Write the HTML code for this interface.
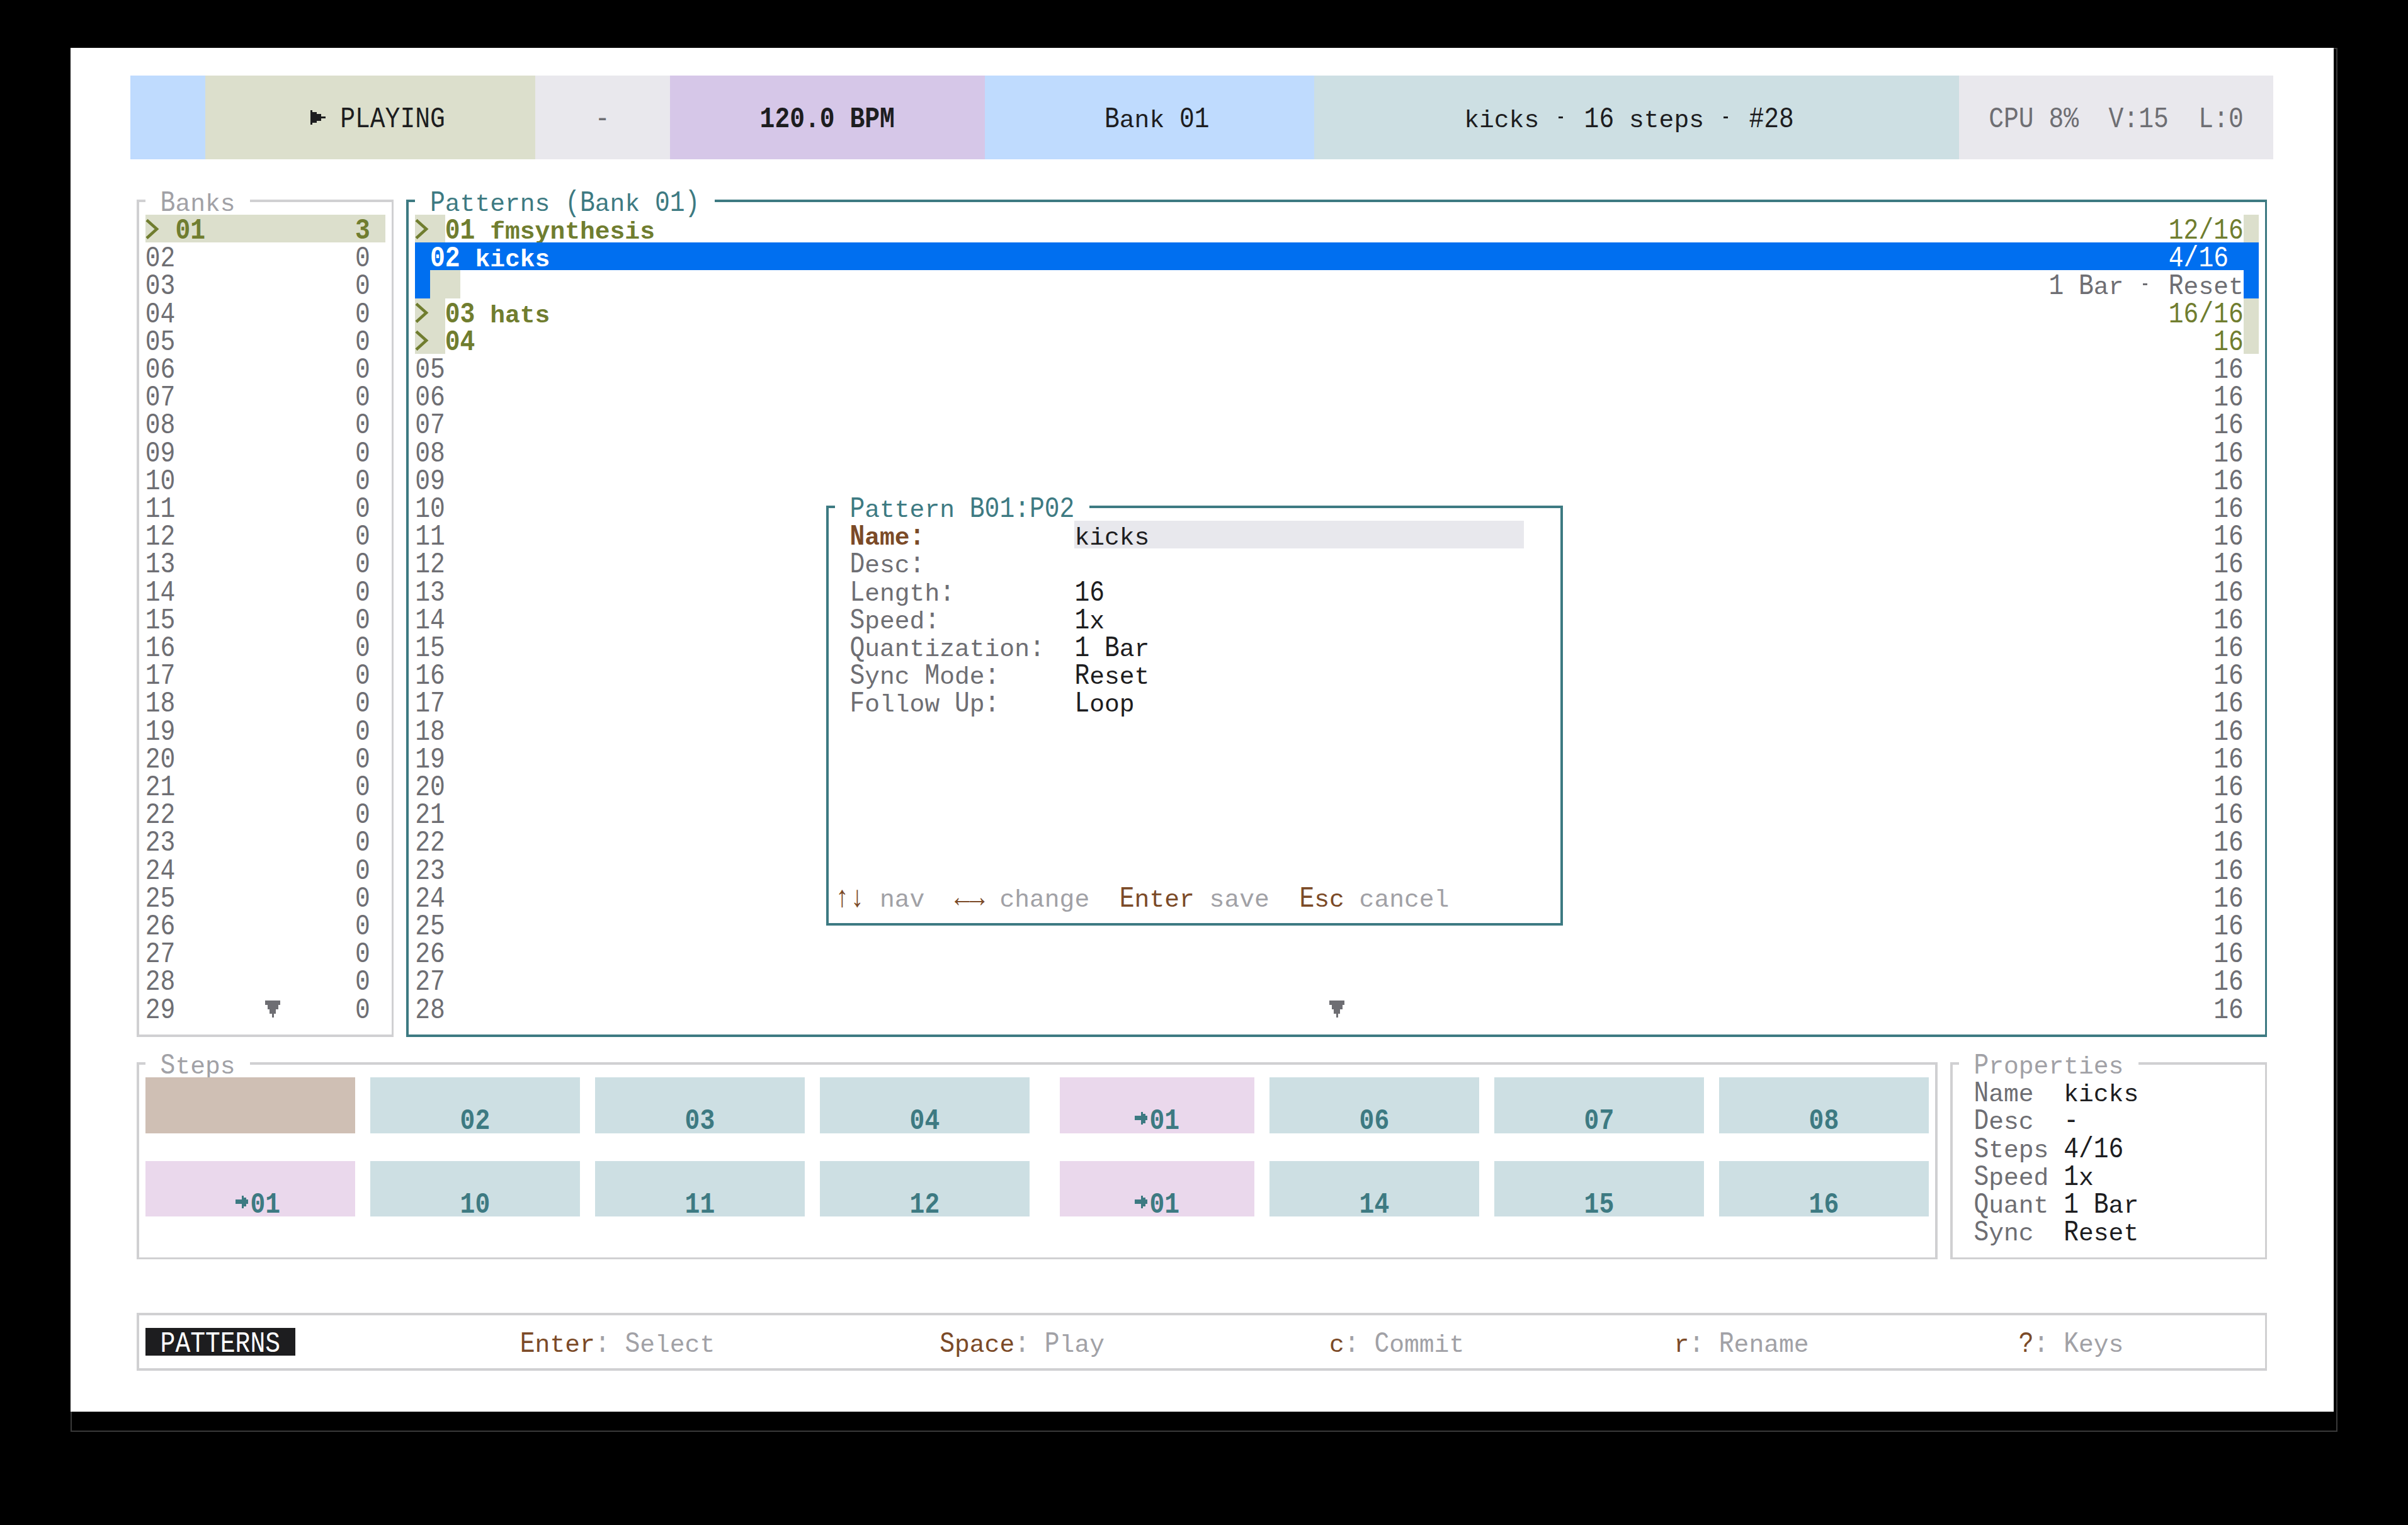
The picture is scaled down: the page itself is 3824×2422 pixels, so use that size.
<!DOCTYPE html>
<html><head><meta charset="utf-8"><style>
html,body{margin:0;padding:0;background:#000;width:3824px;height:2422px;overflow:hidden;position:relative}
.frame{position:absolute;left:112px;top:76px;width:3596px;height:2194px;border:2px solid #3a3a3a}
.term{position:absolute;left:112px;top:76px;width:3594px;height:2166px;background:#fff}
.b{position:absolute}
.t{position:absolute;white-space:pre;font-family:"Liberation Mono",monospace;font-size:39.660px;line-height:44.2px;height:44.2px;transform:scaleY(1.187);transform-origin:0 32.67px}
.tl{transform:scaleY(1.0)}
.tb{font-weight:bold}
</style></head><body>
<div class="frame"></div>
<div class="term"></div>
<div class="b" style="left:207.00px;top:120.00px;width:119.00px;height:132.60px;background:#bfdbfe"></div>
<div class="b" style="left:326.00px;top:120.00px;width:523.60px;height:132.60px;background:#dcdfcc"></div>
<div class="b" style="left:493px;top:175px;width:3px;height:23px;background:#1d1d1f"></div>
<div class="b" style="left:496px;top:178px;width:7px;height:17px;background:#1d1d1f"></div>
<div class="b" style="left:503px;top:181px;width:7px;height:11px;background:#1d1d1f"></div>
<div class="b" style="left:510px;top:185px;width:7px;height:3px;background:#1d1d1f"></div>
<div class="t" style="left:540.20px;top:170.20px;color:#1d1d1f">PLAYING</div>
<div class="b" style="left:849.60px;top:120.00px;width:214.20px;height:132.60px;background:#e9e8ed"></div>
<div class="t" style="left:944.80px;top:170.20px;color:#6e6e73">-</div>
<div class="b" style="left:1063.80px;top:120.00px;width:499.80px;height:132.60px;background:#d6c7e8"></div>
<div class="t tb" style="left:1206.60px;top:170.20px;color:#1d1d1f">120.0 BPM</div>
<div class="b" style="left:1563.60px;top:120.00px;width:523.60px;height:132.60px;background:#bfdbfe"></div>
<div class="t" style="left:1754.00px;top:170.20px;color:#1d1d1f">B</div>
<div class="t tl" style="left:1777.80px;top:170.20px;color:#1d1d1f">ank</div>
<div class="t" style="left:1873.00px;top:170.20px;color:#1d1d1f">01</div>
<div class="b" style="left:2087.20px;top:120.00px;width:1023.40px;height:132.60px;background:#cddfe3"></div>
<div class="b" style="left:2475.00px;top:184.90px;width:7.1px;height:3px;background:#1d1d1f"></div>
<div class="b" style="left:2736.80px;top:184.90px;width:7.1px;height:3px;background:#1d1d1f"></div>
<div class="t tl" style="left:2325.20px;top:170.20px;color:#1d1d1f">kicks</div>
<div class="t" style="left:2515.60px;top:170.20px;color:#1d1d1f">16</div>
<div class="t tl" style="left:2587.00px;top:170.20px;color:#1d1d1f">steps</div>
<div class="t" style="left:2777.40px;top:170.20px;color:#1d1d1f">#28</div>
<div class="b" style="left:3110.60px;top:120.00px;width:499.80px;height:132.60px;background:#e9e8ed"></div>
<div class="t" style="left:3158.20px;top:170.20px;color:#6e6e73">CPU 8%  V:15  L:0</div>
<div class="b" style="left:217.05px;top:317.05px;width:13.75px;height:3.7px;background:#d0d0d2"></div>
<div class="b" style="left:397.40px;top:317.05px;width:227.95px;height:3.7px;background:#d0d0d2"></div>
<div class="t" style="left:254.60px;top:302.80px;color:#a1a1a6">B</div>
<div class="t tl" style="left:278.40px;top:302.80px;color:#a1a1a6">anks</div>
<div class="b" style="left:217.05px;top:1643.05px;width:408.30px;height:3.7px;background:#d0d0d2"></div>
<div class="b" style="left:217.05px;top:317.05px;width:3.7px;height:1329.70px;background:#d0d0d2"></div>
<div class="b" style="left:621.65px;top:317.05px;width:3.7px;height:1329.70px;background:#d0d0d2"></div>
<div class="b" style="left:230.80px;top:341.00px;width:380.80px;height:44.20px;background:#dcdfcc"></div>
<svg class="b" style="left:230.80px;top:341.00px" width="24" height="45" viewBox="0 0 24 45"><polyline points="2,8.5 18,22.8 2,37.2" fill="none" stroke="#707d2f" stroke-width="4.6" stroke-linejoin="miter"/></svg>
<div class="t tb" style="left:278.40px;top:347.00px;color:#707d2f">01</div>
<div class="t tb" style="left:564.00px;top:347.00px;color:#707d2f">3</div>
<div class="t" style="left:230.80px;top:391.20px;color:#6e6e73">02</div>
<div class="t" style="left:564.00px;top:391.20px;color:#6e6e73">0</div>
<div class="t" style="left:230.80px;top:435.40px;color:#6e6e73">03</div>
<div class="t" style="left:564.00px;top:435.40px;color:#6e6e73">0</div>
<div class="t" style="left:230.80px;top:479.60px;color:#6e6e73">04</div>
<div class="t" style="left:564.00px;top:479.60px;color:#6e6e73">0</div>
<div class="t" style="left:230.80px;top:523.80px;color:#6e6e73">05</div>
<div class="t" style="left:564.00px;top:523.80px;color:#6e6e73">0</div>
<div class="t" style="left:230.80px;top:568.00px;color:#6e6e73">06</div>
<div class="t" style="left:564.00px;top:568.00px;color:#6e6e73">0</div>
<div class="t" style="left:230.80px;top:612.20px;color:#6e6e73">07</div>
<div class="t" style="left:564.00px;top:612.20px;color:#6e6e73">0</div>
<div class="t" style="left:230.80px;top:656.40px;color:#6e6e73">08</div>
<div class="t" style="left:564.00px;top:656.40px;color:#6e6e73">0</div>
<div class="t" style="left:230.80px;top:700.60px;color:#6e6e73">09</div>
<div class="t" style="left:564.00px;top:700.60px;color:#6e6e73">0</div>
<div class="t" style="left:230.80px;top:744.80px;color:#6e6e73">10</div>
<div class="t" style="left:564.00px;top:744.80px;color:#6e6e73">0</div>
<div class="t" style="left:230.80px;top:789.00px;color:#6e6e73">11</div>
<div class="t" style="left:564.00px;top:789.00px;color:#6e6e73">0</div>
<div class="t" style="left:230.80px;top:833.20px;color:#6e6e73">12</div>
<div class="t" style="left:564.00px;top:833.20px;color:#6e6e73">0</div>
<div class="t" style="left:230.80px;top:877.40px;color:#6e6e73">13</div>
<div class="t" style="left:564.00px;top:877.40px;color:#6e6e73">0</div>
<div class="t" style="left:230.80px;top:921.60px;color:#6e6e73">14</div>
<div class="t" style="left:564.00px;top:921.60px;color:#6e6e73">0</div>
<div class="t" style="left:230.80px;top:965.80px;color:#6e6e73">15</div>
<div class="t" style="left:564.00px;top:965.80px;color:#6e6e73">0</div>
<div class="t" style="left:230.80px;top:1010.00px;color:#6e6e73">16</div>
<div class="t" style="left:564.00px;top:1010.00px;color:#6e6e73">0</div>
<div class="t" style="left:230.80px;top:1054.20px;color:#6e6e73">17</div>
<div class="t" style="left:564.00px;top:1054.20px;color:#6e6e73">0</div>
<div class="t" style="left:230.80px;top:1098.40px;color:#6e6e73">18</div>
<div class="t" style="left:564.00px;top:1098.40px;color:#6e6e73">0</div>
<div class="t" style="left:230.80px;top:1142.60px;color:#6e6e73">19</div>
<div class="t" style="left:564.00px;top:1142.60px;color:#6e6e73">0</div>
<div class="t" style="left:230.80px;top:1186.80px;color:#6e6e73">20</div>
<div class="t" style="left:564.00px;top:1186.80px;color:#6e6e73">0</div>
<div class="t" style="left:230.80px;top:1231.00px;color:#6e6e73">21</div>
<div class="t" style="left:564.00px;top:1231.00px;color:#6e6e73">0</div>
<div class="t" style="left:230.80px;top:1275.20px;color:#6e6e73">22</div>
<div class="t" style="left:564.00px;top:1275.20px;color:#6e6e73">0</div>
<div class="t" style="left:230.80px;top:1319.40px;color:#6e6e73">23</div>
<div class="t" style="left:564.00px;top:1319.40px;color:#6e6e73">0</div>
<div class="t" style="left:230.80px;top:1363.60px;color:#6e6e73">24</div>
<div class="t" style="left:564.00px;top:1363.60px;color:#6e6e73">0</div>
<div class="t" style="left:230.80px;top:1407.80px;color:#6e6e73">25</div>
<div class="t" style="left:564.00px;top:1407.80px;color:#6e6e73">0</div>
<div class="t" style="left:230.80px;top:1452.00px;color:#6e6e73">26</div>
<div class="t" style="left:564.00px;top:1452.00px;color:#6e6e73">0</div>
<div class="t" style="left:230.80px;top:1496.20px;color:#6e6e73">27</div>
<div class="t" style="left:564.00px;top:1496.20px;color:#6e6e73">0</div>
<div class="t" style="left:230.80px;top:1540.40px;color:#6e6e73">28</div>
<div class="t" style="left:564.00px;top:1540.40px;color:#6e6e73">0</div>
<div class="t" style="left:230.80px;top:1584.60px;color:#6e6e73">29</div>
<div class="t" style="left:564.00px;top:1584.60px;color:#6e6e73">0</div>
<div class="b" style="left:421px;top:1589px;width:24px;height:7px;background:#6e6e73"></div>
<div class="b" style="left:425px;top:1596px;width:17px;height:7px;background:#6e6e73"></div>
<div class="b" style="left:428px;top:1603px;width:10px;height:7px;background:#6e6e73"></div>
<div class="b" style="left:432px;top:1610px;width:3px;height:6px;background:#6e6e73"></div>
<div class="b" style="left:645.45px;top:317.05px;width:13.75px;height:3.7px;background:#3d7a82"></div>
<div class="b" style="left:1135.20px;top:317.05px;width:2465.15px;height:3.7px;background:#3d7a82"></div>
<div class="t" style="left:683.00px;top:302.80px;color:#3d7a82">P</div>
<div class="t tl" style="left:706.80px;top:302.80px;color:#3d7a82">atterns</div>
<div class="t" style="left:897.20px;top:302.80px;color:#3d7a82">(B</div>
<div class="t tl" style="left:944.80px;top:302.80px;color:#3d7a82">ank</div>
<div class="t" style="left:1040.00px;top:302.80px;color:#3d7a82">01)</div>
<div class="b" style="left:645.45px;top:1643.05px;width:2954.90px;height:3.7px;background:#3d7a82"></div>
<div class="b" style="left:645.45px;top:317.05px;width:3.7px;height:1329.70px;background:#3d7a82"></div>
<div class="b" style="left:3596.65px;top:317.05px;width:3.7px;height:1329.70px;background:#3d7a82"></div>
<div class="b" style="left:659.20px;top:341.00px;width:47.60px;height:44.20px;background:#dcdfcc"></div>
<div class="b" style="left:3562.80px;top:341.00px;width:23.80px;height:44.20px;background:#dcdfcc"></div>
<svg class="b" style="left:659.20px;top:341.00px" width="24" height="45" viewBox="0 0 24 45"><polyline points="2,8.5 18,22.8 2,37.2" fill="none" stroke="#707d2f" stroke-width="4.6" stroke-linejoin="miter"/></svg>
<div class="t tb" style="left:706.80px;top:347.00px;color:#707d2f">01</div>
<div class="t tl tb" style="left:778.20px;top:347.00px;color:#707d2f">fmsynthesis</div>
<div class="t" style="left:3443.80px;top:347.00px;color:#707d2f">12/16</div>
<div class="b" style="left:659.20px;top:385.20px;width:2927.40px;height:44.20px;background:#006ff0"></div>
<div class="t tb" style="left:683.00px;top:391.20px;color:#ffffff">02</div>
<div class="t tl tb" style="left:754.40px;top:391.20px;color:#ffffff">kicks</div>
<div class="t" style="left:3443.80px;top:391.20px;color:#ffffff">4/16</div>
<div class="b" style="left:659.20px;top:429.40px;width:23.80px;height:44.20px;background:#006ff0"></div>
<div class="b" style="left:683.00px;top:429.40px;width:47.60px;height:44.20px;background:#dcdfcc"></div>
<div class="b" style="left:3562.80px;top:429.40px;width:23.80px;height:44.20px;background:#006ff0"></div>
<div class="b" style="left:3403.20px;top:450.10px;width:7.1px;height:3px;background:#6e6e73"></div>
<div class="t" style="left:3253.40px;top:435.40px;color:#6e6e73">1 B</div>
<div class="t tl" style="left:3324.80px;top:435.40px;color:#6e6e73">ar</div>
<div class="t" style="left:3443.80px;top:435.40px;color:#6e6e73">R</div>
<div class="t tl" style="left:3467.60px;top:435.40px;color:#6e6e73">eset</div>
<div class="b" style="left:659.20px;top:473.60px;width:47.60px;height:44.20px;background:#dcdfcc"></div>
<div class="b" style="left:3562.80px;top:473.60px;width:23.80px;height:44.20px;background:#dcdfcc"></div>
<svg class="b" style="left:659.20px;top:473.60px" width="24" height="45" viewBox="0 0 24 45"><polyline points="2,8.5 18,22.8 2,37.2" fill="none" stroke="#707d2f" stroke-width="4.6" stroke-linejoin="miter"/></svg>
<div class="t tb" style="left:706.80px;top:479.60px;color:#707d2f">03</div>
<div class="t tl tb" style="left:778.20px;top:479.60px;color:#707d2f">hats</div>
<div class="t" style="left:3443.80px;top:479.60px;color:#707d2f">16/16</div>
<div class="b" style="left:659.20px;top:517.80px;width:47.60px;height:44.20px;background:#dcdfcc"></div>
<div class="b" style="left:3562.80px;top:517.80px;width:23.80px;height:44.20px;background:#dcdfcc"></div>
<svg class="b" style="left:659.20px;top:517.80px" width="24" height="45" viewBox="0 0 24 45"><polyline points="2,8.5 18,22.8 2,37.2" fill="none" stroke="#707d2f" stroke-width="4.6" stroke-linejoin="miter"/></svg>
<div class="t tb" style="left:706.80px;top:523.80px;color:#707d2f">04</div>
<div class="t" style="left:3515.20px;top:523.80px;color:#707d2f">16</div>
<div class="t" style="left:659.20px;top:568.00px;color:#6e6e73">05</div>
<div class="t" style="left:3515.20px;top:568.00px;color:#6e6e73">16</div>
<div class="t" style="left:659.20px;top:612.20px;color:#6e6e73">06</div>
<div class="t" style="left:3515.20px;top:612.20px;color:#6e6e73">16</div>
<div class="t" style="left:659.20px;top:656.40px;color:#6e6e73">07</div>
<div class="t" style="left:3515.20px;top:656.40px;color:#6e6e73">16</div>
<div class="t" style="left:659.20px;top:700.60px;color:#6e6e73">08</div>
<div class="t" style="left:3515.20px;top:700.60px;color:#6e6e73">16</div>
<div class="t" style="left:659.20px;top:744.80px;color:#6e6e73">09</div>
<div class="t" style="left:3515.20px;top:744.80px;color:#6e6e73">16</div>
<div class="t" style="left:659.20px;top:789.00px;color:#6e6e73">10</div>
<div class="t" style="left:3515.20px;top:789.00px;color:#6e6e73">16</div>
<div class="t" style="left:659.20px;top:833.20px;color:#6e6e73">11</div>
<div class="t" style="left:3515.20px;top:833.20px;color:#6e6e73">16</div>
<div class="t" style="left:659.20px;top:877.40px;color:#6e6e73">12</div>
<div class="t" style="left:3515.20px;top:877.40px;color:#6e6e73">16</div>
<div class="t" style="left:659.20px;top:921.60px;color:#6e6e73">13</div>
<div class="t" style="left:3515.20px;top:921.60px;color:#6e6e73">16</div>
<div class="t" style="left:659.20px;top:965.80px;color:#6e6e73">14</div>
<div class="t" style="left:3515.20px;top:965.80px;color:#6e6e73">16</div>
<div class="t" style="left:659.20px;top:1010.00px;color:#6e6e73">15</div>
<div class="t" style="left:3515.20px;top:1010.00px;color:#6e6e73">16</div>
<div class="t" style="left:659.20px;top:1054.20px;color:#6e6e73">16</div>
<div class="t" style="left:3515.20px;top:1054.20px;color:#6e6e73">16</div>
<div class="t" style="left:659.20px;top:1098.40px;color:#6e6e73">17</div>
<div class="t" style="left:3515.20px;top:1098.40px;color:#6e6e73">16</div>
<div class="t" style="left:659.20px;top:1142.60px;color:#6e6e73">18</div>
<div class="t" style="left:3515.20px;top:1142.60px;color:#6e6e73">16</div>
<div class="t" style="left:659.20px;top:1186.80px;color:#6e6e73">19</div>
<div class="t" style="left:3515.20px;top:1186.80px;color:#6e6e73">16</div>
<div class="t" style="left:659.20px;top:1231.00px;color:#6e6e73">20</div>
<div class="t" style="left:3515.20px;top:1231.00px;color:#6e6e73">16</div>
<div class="t" style="left:659.20px;top:1275.20px;color:#6e6e73">21</div>
<div class="t" style="left:3515.20px;top:1275.20px;color:#6e6e73">16</div>
<div class="t" style="left:659.20px;top:1319.40px;color:#6e6e73">22</div>
<div class="t" style="left:3515.20px;top:1319.40px;color:#6e6e73">16</div>
<div class="t" style="left:659.20px;top:1363.60px;color:#6e6e73">23</div>
<div class="t" style="left:3515.20px;top:1363.60px;color:#6e6e73">16</div>
<div class="t" style="left:659.20px;top:1407.80px;color:#6e6e73">24</div>
<div class="t" style="left:3515.20px;top:1407.80px;color:#6e6e73">16</div>
<div class="t" style="left:659.20px;top:1452.00px;color:#6e6e73">25</div>
<div class="t" style="left:3515.20px;top:1452.00px;color:#6e6e73">16</div>
<div class="t" style="left:659.20px;top:1496.20px;color:#6e6e73">26</div>
<div class="t" style="left:3515.20px;top:1496.20px;color:#6e6e73">16</div>
<div class="t" style="left:659.20px;top:1540.40px;color:#6e6e73">27</div>
<div class="t" style="left:3515.20px;top:1540.40px;color:#6e6e73">16</div>
<div class="t" style="left:659.20px;top:1584.60px;color:#6e6e73">28</div>
<div class="t" style="left:3515.20px;top:1584.60px;color:#6e6e73">16</div>
<div class="b" style="left:2111px;top:1589px;width:24px;height:7px;background:#6e6e73"></div>
<div class="b" style="left:2115px;top:1596px;width:17px;height:7px;background:#6e6e73"></div>
<div class="b" style="left:2118px;top:1603px;width:10px;height:7px;background:#6e6e73"></div>
<div class="b" style="left:2122px;top:1610px;width:3px;height:6px;background:#6e6e73"></div>
<div class="b" style="left:1301.80px;top:783.00px;width:1190.00px;height:707.20px;background:#ffffff"></div>
<div class="b" style="left:1311.85px;top:803.25px;width:13.75px;height:3.7px;background:#3d7a82"></div>
<div class="b" style="left:1730.20px;top:803.25px;width:751.55px;height:3.7px;background:#3d7a82"></div>
<div class="t" style="left:1349.40px;top:789.00px;color:#3d7a82">P</div>
<div class="t tl" style="left:1373.20px;top:789.00px;color:#3d7a82">attern</div>
<div class="t" style="left:1539.80px;top:789.00px;color:#3d7a82">B01:P02</div>
<div class="b" style="left:1311.85px;top:1466.25px;width:1169.90px;height:3.7px;background:#3d7a82"></div>
<div class="b" style="left:1311.85px;top:803.25px;width:3.7px;height:666.70px;background:#3d7a82"></div>
<div class="b" style="left:2478.05px;top:803.25px;width:3.7px;height:666.70px;background:#3d7a82"></div>
<div class="b" style="left:1706.40px;top:827.20px;width:714.00px;height:44.20px;background:#e8e8ed"></div>
<div class="t tb" style="left:1349.40px;top:833.20px;color:#7b4a27">N</div>
<div class="t tl tb" style="left:1373.20px;top:833.20px;color:#7b4a27">ame</div>
<div class="t tb" style="left:1444.60px;top:833.20px;color:#7b4a27">:</div>
<div class="t tl" style="left:1706.40px;top:833.20px;color:#1d1d1f">kicks</div>
<div class="t" style="left:1349.40px;top:877.40px;color:#6e6e73">D</div>
<div class="t tl" style="left:1373.20px;top:877.40px;color:#6e6e73">esc</div>
<div class="t" style="left:1444.60px;top:877.40px;color:#6e6e73">:</div>
<div class="t" style="left:1349.40px;top:921.60px;color:#6e6e73">L</div>
<div class="t tl" style="left:1373.20px;top:921.60px;color:#6e6e73">ength</div>
<div class="t" style="left:1492.20px;top:921.60px;color:#6e6e73">:</div>
<div class="t" style="left:1706.40px;top:921.60px;color:#1d1d1f">16</div>
<div class="t" style="left:1349.40px;top:965.80px;color:#6e6e73">S</div>
<div class="t tl" style="left:1373.20px;top:965.80px;color:#6e6e73">peed</div>
<div class="t" style="left:1468.40px;top:965.80px;color:#6e6e73">:</div>
<div class="t" style="left:1706.40px;top:965.80px;color:#1d1d1f">1</div>
<div class="t tl" style="left:1730.20px;top:965.80px;color:#1d1d1f">x</div>
<div class="t" style="left:1349.40px;top:1010.00px;color:#6e6e73">Q</div>
<div class="t tl" style="left:1373.20px;top:1010.00px;color:#6e6e73">uantization</div>
<div class="t" style="left:1635.00px;top:1010.00px;color:#6e6e73">:</div>
<div class="t" style="left:1706.40px;top:1010.00px;color:#1d1d1f">1 B</div>
<div class="t tl" style="left:1777.80px;top:1010.00px;color:#1d1d1f">ar</div>
<div class="t" style="left:1349.40px;top:1054.20px;color:#6e6e73">S</div>
<div class="t tl" style="left:1373.20px;top:1054.20px;color:#6e6e73">ync</div>
<div class="t" style="left:1468.40px;top:1054.20px;color:#6e6e73">M</div>
<div class="t tl" style="left:1492.20px;top:1054.20px;color:#6e6e73">ode</div>
<div class="t" style="left:1563.60px;top:1054.20px;color:#6e6e73">:</div>
<div class="t" style="left:1706.40px;top:1054.20px;color:#1d1d1f">R</div>
<div class="t tl" style="left:1730.20px;top:1054.20px;color:#1d1d1f">eset</div>
<div class="t" style="left:1349.40px;top:1098.40px;color:#6e6e73">F</div>
<div class="t tl" style="left:1373.20px;top:1098.40px;color:#6e6e73">ollow</div>
<div class="t" style="left:1516.00px;top:1098.40px;color:#6e6e73">U</div>
<div class="t tl" style="left:1539.80px;top:1098.40px;color:#6e6e73">p</div>
<div class="t" style="left:1563.60px;top:1098.40px;color:#6e6e73">:</div>
<div class="t" style="left:1706.40px;top:1098.40px;color:#1d1d1f">L</div>
<div class="t tl" style="left:1730.20px;top:1098.40px;color:#1d1d1f">oop</div>
<div class="t" style="left:1325.60px;top:1407.80px;color:#7b4a27">↑↓</div>
<div class="t tl" style="left:1397.00px;top:1407.80px;color:#a1a1a6">nav</div>
<div class="t" style="left:1516.00px;top:1407.80px;color:#7b4a27">←→</div>
<div class="t tl" style="left:1587.40px;top:1407.80px;color:#a1a1a6">change</div>
<div class="t" style="left:1777.80px;top:1407.80px;color:#7b4a27">E</div>
<div class="t tl" style="left:1801.60px;top:1407.80px;color:#7b4a27">nter</div>
<div class="t tl" style="left:1920.60px;top:1407.80px;color:#a1a1a6">save</div>
<div class="t" style="left:2063.40px;top:1407.80px;color:#7b4a27">E</div>
<div class="t tl" style="left:2087.20px;top:1407.80px;color:#7b4a27">sc</div>
<div class="t tl" style="left:2158.60px;top:1407.80px;color:#a1a1a6">cancel</div>
<div class="b" style="left:217.05px;top:1687.25px;width:13.75px;height:3.7px;background:#d0d0d2"></div>
<div class="b" style="left:397.40px;top:1687.25px;width:2679.35px;height:3.7px;background:#d0d0d2"></div>
<div class="t" style="left:254.60px;top:1673.00px;color:#a1a1a6">S</div>
<div class="t tl" style="left:278.40px;top:1673.00px;color:#a1a1a6">teps</div>
<div class="b" style="left:217.05px;top:1996.65px;width:2859.70px;height:3.7px;background:#d0d0d2"></div>
<div class="b" style="left:217.05px;top:1687.25px;width:3.7px;height:313.10px;background:#d0d0d2"></div>
<div class="b" style="left:3073.05px;top:1687.25px;width:3.7px;height:313.10px;background:#d0d0d2"></div>
<div class="b" style="left:230.80px;top:1711.20px;width:333.20px;height:88.40px;background:#cfbfb4"></div>
<div class="b" style="left:587.80px;top:1711.20px;width:333.20px;height:88.40px;background:#cddfe3"></div>
<div class="t tb" style="left:730.60px;top:1761.40px;color:#3d7a82">02</div>
<div class="b" style="left:944.80px;top:1711.20px;width:333.20px;height:88.40px;background:#cddfe3"></div>
<div class="t tb" style="left:1087.60px;top:1761.40px;color:#3d7a82">03</div>
<div class="b" style="left:1301.80px;top:1711.20px;width:333.20px;height:88.40px;background:#cddfe3"></div>
<div class="t tb" style="left:1444.60px;top:1761.40px;color:#3d7a82">04</div>
<div class="b" style="left:1682.60px;top:1711.20px;width:309.40px;height:88.40px;background:#ead8ec"></div>
<div class="b" style="left:1802px;top:1772px;width:20px;height:7px;background:#3d7a82"></div>
<div class="b" style="left:1812px;top:1766px;width:3px;height:20px;background:#3d7a82"></div>
<div class="b" style="left:1815px;top:1769px;width:4px;height:15px;background:#3d7a82"></div>
<div class="t tb" style="left:1825.40px;top:1761.40px;color:#3d7a82">01</div>
<div class="b" style="left:2015.80px;top:1711.20px;width:333.20px;height:88.40px;background:#cddfe3"></div>
<div class="t tb" style="left:2158.60px;top:1761.40px;color:#3d7a82">06</div>
<div class="b" style="left:2372.80px;top:1711.20px;width:333.20px;height:88.40px;background:#cddfe3"></div>
<div class="t tb" style="left:2515.60px;top:1761.40px;color:#3d7a82">07</div>
<div class="b" style="left:2729.80px;top:1711.20px;width:333.20px;height:88.40px;background:#cddfe3"></div>
<div class="t tb" style="left:2872.60px;top:1761.40px;color:#3d7a82">08</div>
<div class="b" style="left:230.80px;top:1843.80px;width:333.20px;height:88.40px;background:#ead8ec"></div>
<div class="b" style="left:374px;top:1905px;width:20px;height:7px;background:#3d7a82"></div>
<div class="b" style="left:384px;top:1899px;width:3px;height:20px;background:#3d7a82"></div>
<div class="b" style="left:387px;top:1902px;width:4px;height:14px;background:#3d7a82"></div>
<div class="t tb" style="left:397.40px;top:1894.00px;color:#3d7a82">01</div>
<div class="b" style="left:587.80px;top:1843.80px;width:333.20px;height:88.40px;background:#cddfe3"></div>
<div class="t tb" style="left:730.60px;top:1894.00px;color:#3d7a82">10</div>
<div class="b" style="left:944.80px;top:1843.80px;width:333.20px;height:88.40px;background:#cddfe3"></div>
<div class="t tb" style="left:1087.60px;top:1894.00px;color:#3d7a82">11</div>
<div class="b" style="left:1301.80px;top:1843.80px;width:333.20px;height:88.40px;background:#cddfe3"></div>
<div class="t tb" style="left:1444.60px;top:1894.00px;color:#3d7a82">12</div>
<div class="b" style="left:1682.60px;top:1843.80px;width:309.40px;height:88.40px;background:#ead8ec"></div>
<div class="b" style="left:1802px;top:1905px;width:20px;height:7px;background:#3d7a82"></div>
<div class="b" style="left:1812px;top:1899px;width:3px;height:20px;background:#3d7a82"></div>
<div class="b" style="left:1815px;top:1902px;width:4px;height:14px;background:#3d7a82"></div>
<div class="t tb" style="left:1825.40px;top:1894.00px;color:#3d7a82">01</div>
<div class="b" style="left:2015.80px;top:1843.80px;width:333.20px;height:88.40px;background:#cddfe3"></div>
<div class="t tb" style="left:2158.60px;top:1894.00px;color:#3d7a82">14</div>
<div class="b" style="left:2372.80px;top:1843.80px;width:333.20px;height:88.40px;background:#cddfe3"></div>
<div class="t tb" style="left:2515.60px;top:1894.00px;color:#3d7a82">15</div>
<div class="b" style="left:2729.80px;top:1843.80px;width:333.20px;height:88.40px;background:#cddfe3"></div>
<div class="t tb" style="left:2872.60px;top:1894.00px;color:#3d7a82">16</div>
<div class="b" style="left:3096.85px;top:1687.25px;width:13.75px;height:3.7px;background:#d0d0d2"></div>
<div class="b" style="left:3396.20px;top:1687.25px;width:204.15px;height:3.7px;background:#d0d0d2"></div>
<div class="t" style="left:3134.40px;top:1673.00px;color:#a1a1a6">P</div>
<div class="t tl" style="left:3158.20px;top:1673.00px;color:#a1a1a6">roperties</div>
<div class="b" style="left:3096.85px;top:1996.65px;width:503.50px;height:3.7px;background:#d0d0d2"></div>
<div class="b" style="left:3096.85px;top:1687.25px;width:3.7px;height:313.10px;background:#d0d0d2"></div>
<div class="b" style="left:3596.65px;top:1687.25px;width:3.7px;height:313.10px;background:#d0d0d2"></div>
<div class="t" style="left:3134.40px;top:1717.20px;color:#6e6e73">N</div>
<div class="t tl" style="left:3158.20px;top:1717.20px;color:#6e6e73">ame</div>
<div class="t tl" style="left:3277.20px;top:1717.20px;color:#1d1d1f">kicks</div>
<div class="t" style="left:3134.40px;top:1761.40px;color:#6e6e73">D</div>
<div class="t tl" style="left:3158.20px;top:1761.40px;color:#6e6e73">esc</div>
<div class="t" style="left:3277.20px;top:1761.40px;color:#1d1d1f">-</div>
<div class="t" style="left:3134.40px;top:1805.60px;color:#6e6e73">S</div>
<div class="t tl" style="left:3158.20px;top:1805.60px;color:#6e6e73">teps</div>
<div class="t" style="left:3277.20px;top:1805.60px;color:#1d1d1f">4/16</div>
<div class="t" style="left:3134.40px;top:1849.80px;color:#6e6e73">S</div>
<div class="t tl" style="left:3158.20px;top:1849.80px;color:#6e6e73">peed</div>
<div class="t" style="left:3277.20px;top:1849.80px;color:#1d1d1f">1</div>
<div class="t tl" style="left:3301.00px;top:1849.80px;color:#1d1d1f">x</div>
<div class="t" style="left:3134.40px;top:1894.00px;color:#6e6e73">Q</div>
<div class="t tl" style="left:3158.20px;top:1894.00px;color:#6e6e73">uant</div>
<div class="t" style="left:3277.20px;top:1894.00px;color:#1d1d1f">1 B</div>
<div class="t tl" style="left:3348.60px;top:1894.00px;color:#1d1d1f">ar</div>
<div class="t" style="left:3134.40px;top:1938.20px;color:#6e6e73">S</div>
<div class="t tl" style="left:3158.20px;top:1938.20px;color:#6e6e73">ync</div>
<div class="t" style="left:3277.20px;top:1938.20px;color:#1d1d1f">R</div>
<div class="t tl" style="left:3301.00px;top:1938.20px;color:#1d1d1f">eset</div>
<div class="b" style="left:217.05px;top:2085.05px;width:3383.30px;height:3.7px;background:#d0d0d2"></div>
<div class="b" style="left:217.05px;top:2173.45px;width:3383.30px;height:3.7px;background:#d0d0d2"></div>
<div class="b" style="left:217.05px;top:2085.05px;width:3.7px;height:92.10px;background:#d0d0d2"></div>
<div class="b" style="left:3596.65px;top:2085.05px;width:3.7px;height:92.10px;background:#d0d0d2"></div>
<div class="b" style="left:230.80px;top:2109.00px;width:238.00px;height:44.20px;background:#1d1d1f"></div>
<div class="t" style="left:254.60px;top:2115.00px;color:#ffffff">PATTERNS</div>
<div class="t" style="left:825.80px;top:2115.00px;color:#7b4a27">E</div>
<div class="t tl" style="left:849.60px;top:2115.00px;color:#7b4a27">nter</div>
<div class="t" style="left:944.80px;top:2115.00px;color:#a1a1a6">:</div>
<div class="t" style="left:992.40px;top:2115.00px;color:#a1a1a6">S</div>
<div class="t tl" style="left:1016.20px;top:2115.00px;color:#a1a1a6">elect</div>
<div class="t" style="left:1492.20px;top:2115.00px;color:#7b4a27">S</div>
<div class="t tl" style="left:1516.00px;top:2115.00px;color:#7b4a27">pace</div>
<div class="t" style="left:1611.20px;top:2115.00px;color:#a1a1a6">:</div>
<div class="t" style="left:1658.80px;top:2115.00px;color:#a1a1a6">P</div>
<div class="t tl" style="left:1682.60px;top:2115.00px;color:#a1a1a6">lay</div>
<div class="t tl" style="left:2111.00px;top:2115.00px;color:#7b4a27">c</div>
<div class="t" style="left:2134.80px;top:2115.00px;color:#a1a1a6">:</div>
<div class="t" style="left:2182.40px;top:2115.00px;color:#a1a1a6">C</div>
<div class="t tl" style="left:2206.20px;top:2115.00px;color:#a1a1a6">ommit</div>
<div class="t tl" style="left:2658.40px;top:2115.00px;color:#7b4a27">r</div>
<div class="t" style="left:2682.20px;top:2115.00px;color:#a1a1a6">:</div>
<div class="t" style="left:2729.80px;top:2115.00px;color:#a1a1a6">R</div>
<div class="t tl" style="left:2753.60px;top:2115.00px;color:#a1a1a6">ename</div>
<div class="t" style="left:3205.80px;top:2115.00px;color:#7b4a27">?</div>
<div class="t" style="left:3229.60px;top:2115.00px;color:#a1a1a6">:</div>
<div class="t" style="left:3277.20px;top:2115.00px;color:#a1a1a6">K</div>
<div class="t tl" style="left:3301.00px;top:2115.00px;color:#a1a1a6">eys</div>
</body></html>
